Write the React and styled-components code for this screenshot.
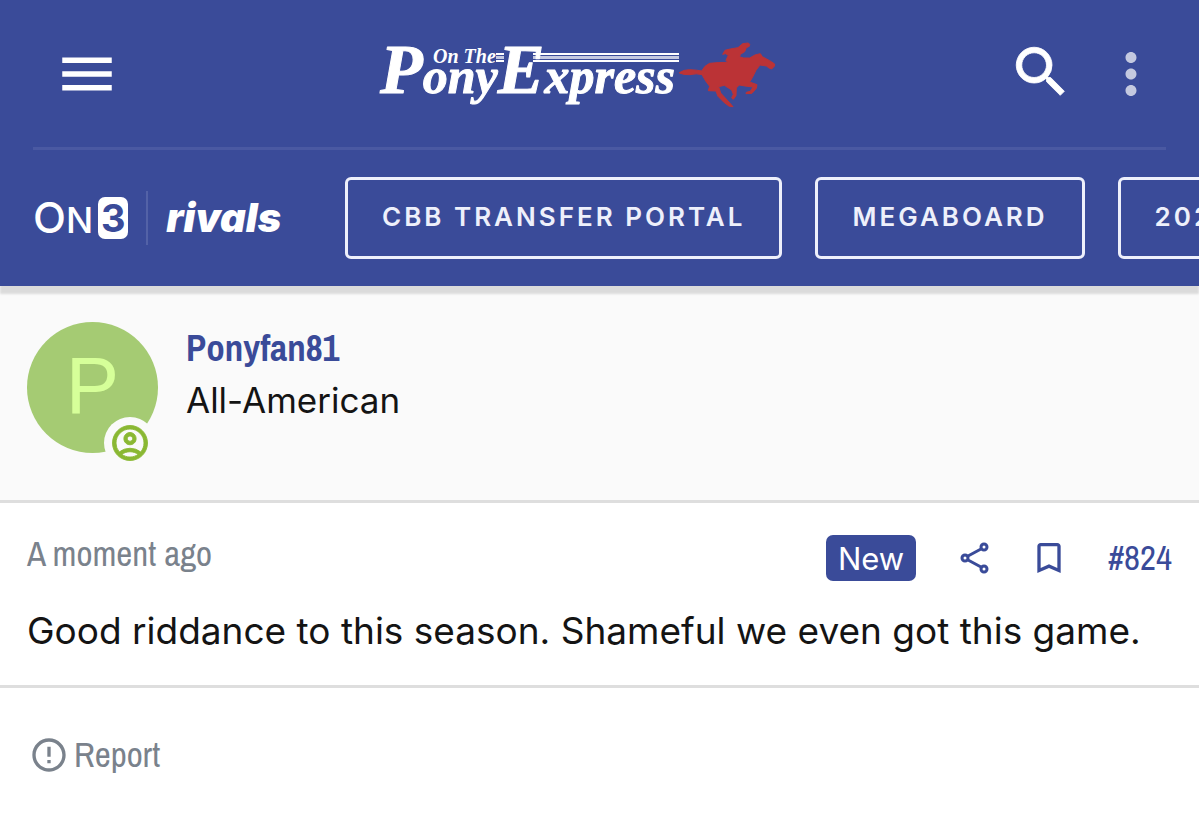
import React from 'react';
import styled, { createGlobalStyle } from 'styled-components';
import {
  MdMenu,
  MdSearch,
  MdMoreVert,
  MdOutlineAccountCircle,
  MdBookmarkBorder,
  MdErrorOutline,
} from 'react-icons/md';

const colors = {
  brand: '#3a4b99',
  text: '#141414',
  muted: '#7a828c',
  line: '#dedede',
  panel: '#fafafa',
};

const narrow = '"Archivo Narrow", "Liberation Sans Narrow", "Roboto Condensed", "Liberation Sans", sans-serif';

const tabs = ['CBB Transfer Portal', 'Megaboard', '2026 Transfer Portal'];

function PonyExpressLogo() {
  return (
    <Logo viewBox="374 34 404 78" role="img" aria-label="On The Pony Express">
      <g fill="#fff">
        <rect x="497" y="52" width="8" height="2" />
        <rect x="497" y="55" width="8" height="3" opacity="0.7" />
        <rect x="497" y="59" width="8" height="2" />
        <rect x="534" y="52" width="146" height="2" />
        <rect x="534" y="55" width="146" height="3" opacity="0.7" />
        <rect x="534" y="59" width="146" height="2" />
      </g>
      <Script x="381" y="92">
        <tspan fontSize="70">P</tspan>
        <tspan>ony</tspan>
        <tspan fontSize="70">E</tspan>
        <tspan>xpress</tspan>
      </Script>
      <OnThe x="434" y="62">
        On The
      </OnThe>
      <g transform="translate(670 30) scale(0.3333)">
        <path
          fill="#bb3336"
          stroke="#bb3336"
          strokeWidth="3"
          strokeLinejoin="round"
          d="M31 125 Q44 116 62 116 Q84 117 98 120 Q106 104 122 97 Q146 94 176 94 L171 88 L178 73 L170 68 L161 70 L168 58 L184 54 L207 50 L221 38 L238 36 L242 40 L241 46 L232 50 L227 62 L214 70 L212 78 L224 81 L242 81 L258 72 L274 68 L280 77 L302 89 L317 99 L316 106 L308 114 L300 111 L292 105 L273 102 L261 118 L250 140 L242 153 L264 161 L262 172 L249 187 L231 188 L232 184 L244 181 L252 168 L228 165 L211 162 L202 171 L201 194 L193 205 L188 201 L193 190 L188 177 L166 163 L149 167 L155 186 L177 210 L192 227 L181 226 L166 215 L147 196 L141 180 L118 179 L122 166 L110 150 L99 131 Q84 126 62 131 Q44 132 31 126Z"
        />
      </g>
    </Logo>
  );
}

function ShareIcon() {
  return (
    <svg width="30" height="32" viewBox="0 0 30 32" fill="none" stroke="currentColor" strokeWidth="3" aria-hidden="true">
      <circle cx="5" cy="16" r="3" />
      <circle cx="24" cy="5" r="3" />
      <circle cx="24" cy="27" r="3" />
      <path d="M8 14 21 7M8 18 21 25" />
    </svg>
  );
}

function SiteHeader() {
  return (
    <Header>
      <TopBar>
        <MenuButton aria-label="Menu">
          <MdMenu size={66} />
        </MenuButton>
        <LogoLink href="#home">
          <PonyExpressLogo />
        </LogoLink>
        <SearchButton aria-label="Search">
          <MdSearch size={66} />
        </SearchButton>
        <MoreButton aria-label="More">
          <MdMoreVert size={66} />
        </MoreButton>
      </TopBar>
      <NavBar>
        <Network>
          <On3 href="#on3" aria-label="On3">
            <OnText>
              O<small>N</small>
            </OnText>
            <Three>3</Three>
          </On3>
          <Rivals href="#rivals">rivals</Rivals>
        </Network>
        <Tabs>
          {tabs.map((tab) => (
            <Tab key={tab} href="#board">
              {tab}
            </Tab>
          ))}
        </Tabs>
      </NavBar>
    </Header>
  );
}

function App() {
  return (
    <>
      <GlobalStyle />
      <SiteHeader />
      <article>
        <UserPanel>
          <Avatar>
            P
            <AvatarBadge>
              <MdOutlineAccountCircle size={42} />
            </AvatarBadge>
          </Avatar>
          <div>
            <UserName href="#user">Ponyfan81</UserName>
            <UserTitle>All-American</UserTitle>
          </div>
        </UserPanel>
        <Post>
          <PostMeta>
            <Time>A moment ago</Time>
            <Actions>
              <NewLabel>New</NewLabel>
              <IconButton $brand aria-label="Share">
                <ShareIcon />
              </IconButton>
              <IconButton $brand aria-label="Bookmark">
                <MdBookmarkBorder size={40} />
              </IconButton>
              <PostNumber href="#post-824">#824</PostNumber>
            </Actions>
          </PostMeta>
          <Message>Good riddance to this season. Shameful we even got this game.</Message>
        </Post>
        <PostFooter>
          <Report>
            <MdErrorOutline size={40} />
            Report
          </Report>
        </PostFooter>
      </article>
    </>
  );
}

export default App;

const GlobalStyle = createGlobalStyle`
  * {
    box-sizing: border-box;
  }

  body {
    margin: 0;
    background: #fff;
    color: ${colors.text};
    font-family: Inter, "Liberation Sans", sans-serif;
    overflow-x: hidden;
  }

  a {
    text-decoration: none;
  }

  svg {
    display: block;
  }
`;

const Header = styled.header`
  position: relative;
  background: ${colors.brand};
  color: #fff;
  box-shadow: 0 8px 2px rgba(0, 0, 0, 0.12);
`;

const TopBar = styled.div`
  display: flex;
  align-items: center;
  height: 150px;
  margin: 0 33px;
  padding-right: 2px;
  border-bottom: 3px solid #4a59a2;
`;

const IconButton = styled.button`
  display: flex;
  align-items: center;
  justify-content: center;
  padding: 0;
  border: 0;
  background: none;
  color: ${(props) => (props.$brand ? colors.brand : '#fff')};
`;

const MenuButton = styled(IconButton)`
  width: 108px;
`;

const SearchButton = styled(IconButton)`
  padding-bottom: 4px;

  path:not([fill='none']) {
    stroke: #fff;
    stroke-width: 0.3;
  }
`;

const MoreButton = styled(IconButton)`
  margin-left: 24px;
  color: #c4c9e0;
`;

const LogoLink = styled.a`
  display: flex;
  flex: 1;
  justify-content: center;
`;

const Logo = styled.svg`
  width: 404px;
  height: 78px;
  overflow: visible;
`;

const Script = styled.text`
  font: italic 700 50px 'Liberation Serif', serif;
  fill: #fff;
  stroke: #fff;
  stroke-linejoin: round;
`;

const OnThe = styled.text`
  font: italic 700 20px 'Liberation Serif', serif;
  fill: #fff;
`;

const NavBar = styled.nav`
  display: flex;
  align-items: center;
  padding: 27px 0 27px 33px;
  overflow: hidden;
`;

const Network = styled.div`
  display: flex;
  flex: none;
  align-items: center;
  width: 312px;
`;

const On3 = styled.a`
  display: flex;
  align-items: center;
  gap: 5px;
  height: 54px;
  padding-right: 18px;
  border-right: 2px solid #5362a7;
  color: #fff;
`;

const OnText = styled.span`
  font-size: 43px;
  font-weight: 500;
  line-height: 42px;

  small {
    font-size: 36px;
  }
`;

const Three = styled.span`
  width: 30px;
  border-radius: 7px;
  background: #fff;
  color: ${colors.brand};
  font-size: 38px;
  font-weight: 700;
  line-height: 42px;
  text-align: center;
`;

const Rivals = styled.a`
  padding-left: 18px;
  color: #fff;
  font-size: 40px;
  font-style: italic;
  font-weight: 900;
  line-height: 42px;
`;

const Tabs = styled.div`
  display: flex;
  gap: 33px;
`;

const Tab = styled.a`
  flex: none;
  padding: 20px 34px 22px;
  border: 3px solid #eef0fb;
  border-radius: 6px;
  color: #eef0fb;
  font-size: 26px;
  font-weight: 600;
  letter-spacing: 3px;
  line-height: 34px;
  text-transform: uppercase;
  white-space: nowrap;
`;

const UserPanel = styled.section`
  display: flex;
  gap: 28px;
  min-height: 217px;
  padding: 36px 27px;
  border-bottom: 3px solid ${colors.line};
  background: ${colors.panel};
`;

const Avatar = styled.div`
  position: relative;
  flex: none;
  width: 131px;
  height: 131px;
  border-radius: 50%;
  background: #a5cb73;
  color: #d6ff99;
  font-family: 'Liberation Sans', sans-serif;
  font-size: 80px;
  line-height: 128px;
  text-align: center;
`;

const AvatarBadge = styled.span`
  position: absolute;
  right: 2px;
  bottom: -16px;
  padding: 5px;
  border-radius: 50%;
  background: ${colors.panel};
  color: #8ab833;

  path:not([fill='none']) {
    stroke: currentColor;
    stroke-width: 0.5;
  }
`;

const UserName = styled.a`
  color: ${colors.brand};
  font-family: ${narrow};
  font-size: 37px;
  font-weight: 700;
  line-height: 52px;
`;

const UserTitle = styled.p`
  margin: 0;
  font-size: 35px;
  line-height: 52px;
`;

const Post = styled.section`
  padding: 28px 27px;
  border-bottom: 3px solid ${colors.line};
`;

const PostMeta = styled.div`
  display: flex;
  justify-content: space-between;
`;

const Time = styled.time`
  color: ${colors.muted};
  font-family: ${narrow};
  font-size: 35px;
  line-height: 46px;
`;

const Actions = styled.div`
  display: flex;
  align-items: center;
  gap: 39px;
  padding-top: 4px;
`;

const NewLabel = styled.span`
  margin-right: 5px;
  padding: 2px 12px 0;
  border-radius: 7px;
  background: ${colors.brand};
  color: #fff;
  font-size: 31px;
  line-height: 44px;
`;

const PostNumber = styled.a`
  color: ${colors.brand};
  font-family: ${narrow};
  font-size: 35px;
  line-height: 46px;
`;

const Message = styled.p`
  margin: 24px 0 0;
  font-size: 37px;
  line-height: 52px;
`;

const PostFooter = styled.footer`
  padding: 44px 29px;
`;

const Report = styled.button`
  display: flex;
  align-items: center;
  gap: 5px;
  padding: 0;
  border: 0;
  background: none;
  color: ${colors.muted};
  font-family: ${narrow};
  font-size: 35px;
  line-height: 46px;
`;
